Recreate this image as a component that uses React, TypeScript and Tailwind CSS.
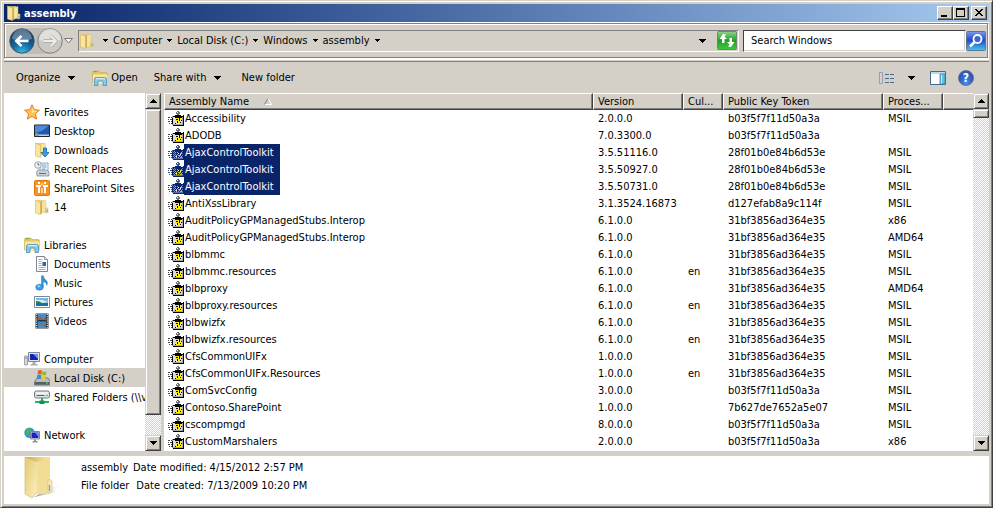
import type { ReactNode } from "react";

type IconProps = { className?: string };

const ASSEMBLIES = [
  { name: "Accessibility", version: "2.0.0.0", culture: "", token: "b03f5f7f11d50a3a", arch: "MSIL" },
  { name: "ADODB", version: "7.0.3300.0", culture: "", token: "b03f5f7f11d50a3a", arch: "" },
  { name: "AjaxControlToolkit", version: "3.5.51116.0", culture: "", token: "28f01b0e84b6d53e", arch: "MSIL", selected: true },
  { name: "AjaxControlToolkit", version: "3.5.50927.0", culture: "", token: "28f01b0e84b6d53e", arch: "MSIL", selected: true },
  { name: "AjaxControlToolkit", version: "3.5.50731.0", culture: "", token: "28f01b0e84b6d53e", arch: "MSIL", selected: true },
  { name: "AntiXssLibrary", version: "3.1.3524.16873", culture: "", token: "d127efab8a9c114f", arch: "MSIL" },
  { name: "AuditPolicyGPManagedStubs.Interop", version: "6.1.0.0", culture: "", token: "31bf3856ad364e35", arch: "x86" },
  { name: "AuditPolicyGPManagedStubs.Interop", version: "6.1.0.0", culture: "", token: "31bf3856ad364e35", arch: "AMD64" },
  { name: "blbmmc", version: "6.1.0.0", culture: "", token: "31bf3856ad364e35", arch: "MSIL" },
  { name: "blbmmc.resources", version: "6.1.0.0", culture: "en", token: "31bf3856ad364e35", arch: "MSIL" },
  { name: "blbproxy", version: "6.1.0.0", culture: "", token: "31bf3856ad364e35", arch: "AMD64" },
  { name: "blbproxy.resources", version: "6.1.0.0", culture: "en", token: "31bf3856ad364e35", arch: "MSIL" },
  { name: "blbwizfx", version: "6.1.0.0", culture: "", token: "31bf3856ad364e35", arch: "MSIL" },
  { name: "blbwizfx.resources", version: "6.1.0.0", culture: "en", token: "31bf3856ad364e35", arch: "MSIL" },
  { name: "CfsCommonUIFx", version: "1.0.0.0", culture: "", token: "31bf3856ad364e35", arch: "MSIL" },
  { name: "CfsCommonUIFx.Resources", version: "1.0.0.0", culture: "en", token: "31bf3856ad364e35", arch: "MSIL" },
  { name: "ComSvcConfig", version: "3.0.0.0", culture: "", token: "b03f5f7f11d50a3a", arch: "MSIL" },
  { name: "Contoso.SharePoint", version: "1.0.0.0", culture: "", token: "7b627de7652a5e07", arch: "MSIL" },
  { name: "cscompmgd", version: "8.0.0.0", culture: "", token: "b03f5f7f11d50a3a", arch: "MSIL" },
  { name: "CustomMarshalers", version: "2.0.0.0", culture: "", token: "b03f5f7f11d50a3a", arch: "x86" },
];

function Caret({ className = "" }: IconProps) {
  return (
    <svg viewBox="0 0 7 4" className={`h-[4px] w-[7px] ${className}`} shapeRendering="crispEdges" aria-hidden>
      <path d="M0 0h7v1H6v1H5v1H4v1H3V3H2V2H1V1H0z" fill="#000" />
    </svg>
  );
}

function SmallCaret() {
  return (
    <svg viewBox="0 0 5 3" className="h-[3px] w-[5px]" shapeRendering="crispEdges" aria-hidden>
      <path d="M0 0h5v1H4v1H3v1H2V2H1V1H0z" fill="#000" />
    </svg>
  );
}

function FolderIcon({ className = "size-4" }: IconProps) {
  return (
    <svg viewBox="0 0 16 16" className={className} aria-hidden>
      <path d="M2 1.200h8V13H2z" fill="#e2c566" />
      <path d="M7 2.500 12 1.500v11.500L7 14.500z" fill="#f5e3a0" stroke="#d9bf70" strokeWidth=".4" />
      <path d="M1.500 1 6.500 3.500v12L1.500 14z" fill="#f8e6a0" stroke="#d6b758" strokeWidth=".6" />
      <path d="M6.500 3.500 8 2.300V14l-1.500 1.500z" fill="#d0ad4d" />
      <path d="M11.500 9h2.500v4.500l-2.500.6z" fill="#f5e2a0" stroke="#cdb163" strokeWidth=".5" />
      <path d="M13 10.500v2.500" stroke="#3f9bdc" />
    </svg>
  );
}

function LargeFolderIcon({ className = "h-[43px] w-[40px]" }: IconProps) {
  return (
    <svg viewBox="0 0 40 43" className={className} aria-hidden>
      <defs>
        <linearGradient id="folderFront" x1="0" x2="1" y2="1">
          <stop offset="0" stopColor="#e2c873" />
          <stop offset="1" stopColor="#fcf0bd" />
        </linearGradient>
        <linearGradient id="folderBack" x1="0" x2="1">
          <stop offset="0" stopColor="#c9a548" />
          <stop offset=".55" stopColor="#e9cf7d" />
          <stop offset="1" stopColor="#f8e8ad" />
        </linearGradient>
        <linearGradient id="folderShade" x1="0" x2="1">
          <stop offset="0" stopColor="#8c8c8c" />
          <stop offset="1" stopColor="#fff" stopOpacity="0" />
        </linearGradient>
      </defs>
      <path d="M26 32 39 27 30 37 10 41z" fill="url(#folderShade)" />
      <path d="M1 1h25v36l-13 1z" fill="url(#folderBack)" />
      <path d="M13 6 26 1v36l-13 1z" fill="#f2dd94" />
      <path d="M24 24q4-1 4 1v11l-4 1z" fill="#f9ebb8" stroke="#d4b96e" strokeWidth=".6" />
      <path d="M1 1 13 6v30l-5 6-7-4z" fill="url(#folderFront)" stroke="#d9bd6b" strokeWidth=".7" />
      <path d="M13 6v30" stroke="#fdf4cc" strokeWidth=".8" />
      <path d="M25.500 29v6" stroke="#5ba6de" strokeWidth="1.300" />
    </svg>
  );
}

function LibraryIcon({ className = "size-4" }: IconProps) {
  return (
    <svg viewBox="0 0 16 16" className={className} aria-hidden>
      <path d="M.500 3q0-2 1.500-2H7l1 1.500h6q1.500 0 1.500 1.500v9H.5z" fill="#e6c763" stroke="#c8a94f" strokeWidth=".6" />
      <path d="M1.500 1.700H5" stroke="#55b043" />
      <path d="M1 4.500h14.500V14H1z" fill="#f8e7a4" />
      <path d="M2.500 15.500V9.500q0-2 2-2h8q2 0 2 2v6h-3.500V12q0-1-1-1H7q-1 0-1 1v3.500z" fill="#86cbed" stroke="#3584b8" strokeWidth=".7" />
      <path d="M4 8.700h9" stroke="#e2f5fd" />
    </svg>
  );
}

function StarIcon() {
  return (
    <svg viewBox="0 0 16 16" className="size-4" aria-hidden>
      <path d="m8 .8 2.200 4.900 5.200.5-3.900 3.600 1.100 5.300L8 12.400l-4.600 2.700 1.100-5.300L.6 6.200l5.200-.5z" fill="#ffc64a" stroke="#e8752a" strokeWidth="1" strokeLinejoin="round" />
      <path d="m8 3 1.300 3.500 3.700.5-5 2z" fill="#ffe69a" />
    </svg>
  );
}

function DesktopIcon() {
  return (
    <svg viewBox="0 0 16 16" className="size-4" aria-hidden>
      <path d="M.5 2h15v11.500H.5z" fill="#2457a8" stroke="#1c2733" />
      <path d="M1 2.500h14L8 8 1 10z" fill="#4b8add" />
      <path d="M1 11.500h14V13H1z" fill="#b9cde4" />
      <circle cx="3" cy="11.500" r="1.800" fill="#3ba0d8" />
      <path d="M2 11h1v1H2z" fill="#f0c430" />
    </svg>
  );
}

function DownloadsIcon() {
  return (
    <svg viewBox="0 0 16 16" className="size-4" aria-hidden>
      <path d="M2 1h9v12.500H2z" fill="#e5ca70" />
      <path d="M7 2.500 12 1v12l-5 1.500z" fill="#f5e3a0" />
      <path d="M1.500 1 6.500 3.500v12L1.500 14z" fill="#f8e6a0" stroke="#d6b758" strokeWidth=".6" />
      <path d="M9.500 6h3v4.500H15L11 15l-4-4.500h2.500z" fill="#3b9be4" stroke="#1866ad" strokeWidth=".8" />
    </svg>
  );
}

function RecentIcon() {
  return (
    <svg viewBox="0 0 16 16" className="size-4" aria-hidden>
      <path d="M6 2h8v9H6z" fill="#f4f7fa" stroke="#8a96a3" strokeWidth=".8" />
      <path d="M8 4h4.500M8 6h4.500M8 8h3" stroke="#5b9bd0" strokeWidth=".9" />
      <path d="M2.500 11 4 9h9l2 2v4h-12z" fill="#c8d0d8" stroke="#7e8995" strokeWidth=".7" />
      <path d="M5 12.500h7" stroke="#65717d" />
      <circle cx="4" cy="4" r="3.300" fill="#f1f3f5" stroke="#8f979f" strokeWidth=".9" />
      <path d="M4 2v2h1.500" fill="none" stroke="#444" strokeWidth=".8" />
    </svg>
  );
}

function SharePointIcon() {
  return (
    <svg viewBox="0 0 16 16" className="size-4" aria-hidden>
      <rect x=".5" y=".5" width="15" height="15" rx="1" fill="#f9931d" stroke="#e0760c" />
      <path d="M4 2h2v2H4zM10 2h2v2h-2z" fill="#fff" />
      <path d="M2 5h5v2H2zM9 5h5v2H9zM4 6h2v7H4zM10 6h2v7h-2z" fill="#fff" />
      <path d="M7 3h2v2H7zM7 8h2v5H7z" fill="#ffd08a" />
    </svg>
  );
}

function DocumentIcon() {
  return (
    <svg viewBox="0 0 16 16" className="size-4" aria-hidden>
      <path d="M2.500.5h8l3 3v12h-11z" fill="#fff" stroke="#7d8790" />
      <path d="M10.500.5v3h3" fill="#dfe5ea" stroke="#7d8790" strokeWidth=".8" />
      <path d="M4.500 3.500h4M4.500 5.500h3M4.500 7.500h3M4.500 9.500h3M4.500 11.500h7M4.500 13.500h7" stroke="#7c9dbb" strokeWidth=".8" />
      <path d="M8.500 6h3.500v4H8.500z" fill="#1d6cb5" />
    </svg>
  );
}

function MusicIcon() {
  return (
    <svg viewBox="0 0 16 16" className="size-4" aria-hidden>
      <path d="M7.500 12V.8h1.800Q9.600 4 12 5.200q2.500 2 .8 5.300.3-3-3.500-4V12z" fill="#2f92d8" stroke="#1b6bb0" strokeWidth=".4" />
      <ellipse cx="5.500" cy="12.200" rx="3.800" ry="3" fill="#3ba0e2" stroke="#1b6bb0" strokeWidth=".5" />
      <ellipse cx="4.800" cy="11.300" rx="1.600" ry="1" fill="#9bd5f7" />
    </svg>
  );
}

function PictureIcon() {
  return (
    <svg viewBox="0 0 16 16" className="size-4" aria-hidden>
      <path d="M.5 2.500h15v11H.5z" fill="#fff" stroke="#7d8790" />
      <path d="M2 4h12v8H2z" fill="#6fb9e8" />
      <path d="M2 6q5-1 12 2v2H2z" fill="#d7effa" />
      <path d="M2 7q4 0 6 2l6-.5V10H2z" fill="#2e7a4b" />
      <path d="M2 10h12v2H2z" fill="#1b6f9b" />
    </svg>
  );
}

function VideoIcon() {
  return (
    <svg viewBox="0 0 16 16" className="size-4" aria-hidden>
      <path d="M1.500.5h13v15h-13z" fill="#26323c" />
      <path d="M4 1h8v6H4zM4 8.500h8V15H4z" fill="#3c91d1" />
      <path d="M4 4q3-2 4 1t4-2v4H4zM5 11q2-2 3 0t4-1v4z" fill="#a55c3b" />
      <path d="M2.700 1v14M13.300 1v14" stroke="#fff" strokeWidth="1.200" strokeDasharray="1 1.200" />
    </svg>
  );
}

function ComputerIcon() {
  return (
    <svg viewBox="0 0 16 16" className="size-4" aria-hidden>
      <path d="M.5 5h3v9h-3z" fill="#d5d9dd" stroke="#858c94" strokeWidth=".7" />
      <path d="M1.500 7h1" stroke="#333" />
      <path d="M4.500 1.500h11v9h-11z" fill="#e3e5e8" stroke="#80868d" />
      <path d="M6 3h8v6H6z" fill="#1420b8" />
      <path d="M9 3h5v5z" fill="#6d8cf4" />
      <path d="M8.500 11h3v2h2v1.500h-7V13h2z" fill="#a8adb3" />
    </svg>
  );
}

function DiskIcon() {
  return (
    <svg viewBox="0 0 16 16" className="size-4" aria-hidden>
      <path d="M3 8h11l2 3v4H.500v-3z" fill="#b5bcc3" stroke="#626b73" strokeWidth=".8" />
      <path d="M1 12h14.500v2.700H1z" fill="#566069" />
      <path d="M12 13h2" stroke="#5be34c" strokeWidth="1.200" />
      <path d="M4 .8q2-1.500 4 0L7.500 4.500q-2-1.200-4 0z" fill="#ef5a28" />
      <path d="M8.500 1.200q2 1.200 4 0L12 4.800q-2 1-4 0z" fill="#82bf35" />
      <path d="M3.300 5.200q2-1.300 4 0L6.700 9q-2-1.200-4 0z" fill="#2e92d4" />
      <path d="M7.900 5.500q2 1.200 4 0L11.300 9q-2 1.200-4 0z" fill="#fcc52d" />
    </svg>
  );
}

function SharedIcon() {
  return (
    <svg viewBox="0 0 16 16" className="size-4" aria-hidden>
      <rect x=".5" y="2" width="15" height="7" rx="2" fill="#dfe2e5" stroke="#727a82" />
      <path d="M2 4h12" stroke="#fff" />
      <path d="M2.500 6.500h8" stroke="#59626a" />
      <path d="M12 6.500h2" stroke="#44c83c" />
      <path d="M7 9h2v3h6v2H1v-2h6z" fill="#27b268" />
      <path d="M5.500 11.500h5v3.500h-5z" fill="#159052" />
    </svg>
  );
}

function NetworkIcon() {
  return (
    <svg viewBox="0 0 16 16" className="size-4" aria-hidden>
      <circle cx="5.500" cy="5.800" r="5.200" fill="#2e96d8" />
      <path d="M2 3q2-2.500 4-2l1 2-2 2-1 3-2-1zM5 8l3-1v3l-2 1z" fill="#4cb648" />
      <path d="M6.500 4.500h9v7.500h-9z" fill="#dadde2" stroke="#80868d" />
      <path d="M7.500 5.500h7V11h-7z" fill="#1524bb" />
      <path d="M11 5.500h3.500V10z" fill="#7190f5" />
      <path d="M10 12.500h2V14h1.500v1.500h-5V14H10z" fill="#8e959c" />
    </svg>
  );
}

function AssemblyIcon({ selected }: { selected?: boolean }) {
  const ink = selected ? "#0a246a" : "#000";
  return (
    <svg viewBox="0 0 16 16" className="size-4 shrink-0" shapeRendering="crispEdges" aria-hidden>
      <path d="M9 0h2v1h1v2h-1v1H9V3H8V1h1z" fill={selected ? "#3d5696" : "#6e6e6e"} />
      <path d="M9 1h1v1H9z" fill="#fff" />
      <path d="M0 6h2v1H0zM3 6h1v1H3zM0 8h1v1H0zM2 8h2v1H2zM0 10h2v1H0zM3 10h1v1H3zM1 12h1v1H1zM3 12h1v1H3z" fill={selected ? "#33497f" : "#444"} />
      <path d="M4 5h11v9H4z" fill={selected ? "#5a70aa" : "#a8a8a8"} />
      <path d="M7 4h6v1H7zM5 5h10v1H5zM15 4h1v11h-1zM5 14h11v1H5zM4 7h1v6H4z" fill={ink} />
      <path d="M5 6h2v7H5z" fill={selected ? "#7f92c0" : "#dcdcdc"} />
      <path d="M7 6h1v1h6v6H7z" fill={selected ? "#b9c02c" : "#ffee00"} />
      <path d="M8 8h2v1H8zM11 7h1v3h-1zM9 10h1v2H9zM12 11h1v1h-1zM7 12h1v1H7zM7 6h7v1H7zM13 9h1v1h-1z" fill={ink} />
      <path d="M10 8h1v1h-1zM12 9h1v1h-1zM8 11h1v1H8z" fill="#fff" />
      {selected && (
        <path
          d="M5 6h1v1H5zM7 6h1v1H7zM6 7h1v1H6zM8 7h1v1H8zM10 7h1v1h-1zM12 7h1v1h-1zM5 8h1v1H5zM7 8h1v1H7zM6 9h1v1H6zM8 9h1v1H8zM10 9h1v1h-1zM5 10h1v1H5zM7 10h1v1H7zM13 10h1v1h-1zM6 11h1v1H6zM10 11h1v1h-1zM5 12h1v1H5zM9 12h1v1H9zM11 12h1v1h-1zM14 7h1v1h-1zM14 9h1v1h-1zM14 11h1v1h-1z"
          fill="#0a246a"
        />
      )}
    </svg>
  );
}

function BackForward() {
  return (
    <div className="flex items-center rounded-full bg-[#c0bdb6]">
      <button type="button" aria-label="Back" className="size-[26px]">
        <svg viewBox="0 0 26 26" className="size-[26px]" aria-hidden>
          <defs>
            <radialGradient id="backFill" cx=".5" cy="1" r=".9">
              <stop offset="0" stopColor="#35c3f0" />
              <stop offset=".5" stopColor="#12669c" />
              <stop offset="1" stopColor="#12365d" />
            </radialGradient>
          </defs>
          <circle cx="13" cy="13" r="12.200" fill="url(#backFill)" stroke="#46596b" />
          <path d="M3 11A10 10 0 0 1 23 11Q13 14 3 11z" fill="#fff" opacity=".32" />
          <path d="M19.500 13H8M12.500 7.800 7.300 13l5.200 5.200" fill="none" stroke="#fff" strokeWidth="2.600" />
        </svg>
      </button>
      <button type="button" aria-label="Forward" className="ml-[2px] size-[26px]">
        <svg viewBox="0 0 26 26" className="size-[26px]" aria-hidden>
          <circle cx="13" cy="13" r="12.200" fill="#cbc9c5" stroke="#85847f" />
          <path d="M2 12A11 11 0 0 1 24 12Q13 15 2 12z" fill="#e0dfdc" />
          <path d="M6.500 13H18M13.500 7.800l5.200 5.200-5.200 5.200" fill="none" stroke="#a9a7a3" strokeWidth="3.600" />
          <path d="M6.500 13H18M13.500 7.800l5.200 5.200-5.200 5.200" fill="none" stroke="#eeedeb" strokeWidth="2.200" />
        </svg>
      </button>
    </div>
  );
}

function WindowButton({ label, children }: { label: string; children: ReactNode }) {
  return (
    <button
      type="button"
      aria-label={label}
      className="h-[14px] w-4 border border-t-white border-r-[#404040] border-b-[#404040] border-l-white bg-[#d4d0c8] shadow-[inset_-1px_-1px_0_#808080]"
    >
      <svg viewBox="0 0 14 12" className="h-[12px] w-[14px]" shapeRendering="crispEdges" aria-hidden>
        {children}
      </svg>
    </button>
  );
}

function ScrollButton({ up }: { up?: boolean }) {
  return (
    <button
      type="button"
      aria-label={up ? "Scroll up" : "Scroll down"}
      className="flex h-4 w-4 shrink-0 items-center justify-center border border-t-[#d4d0c8] border-r-[#404040] border-b-[#404040] border-l-[#d4d0c8] bg-[#d4d0c8] shadow-[inset_1px_1px_0_#fff,inset_-1px_-1px_0_#808080]"
    >
      <Caret className={up ? "rotate-180" : ""} />
    </button>
  );
}

function ScrollBar({ thumb }: { thumb: string }) {
  return (
    <div className="flex w-4 shrink-0 flex-col bg-[repeating-conic-gradient(#d4d0c8_0_25%,#fff_0_50%)] bg-size-[2px_2px]">
      <ScrollButton up />
      <div className="min-h-0 flex-1">
        <div
          className="border border-t-[#d4d0c8] border-r-[#404040] border-b-[#404040] border-l-[#d4d0c8] bg-[#d4d0c8] shadow-[inset_1px_1px_0_#fff,inset_-1px_-1px_0_#808080]"
          style={{ height: thumb }}
        />
      </div>
      <ScrollButton />
    </div>
  );
}

type TreeItem = { label: string; icon: ReactNode; active?: boolean };

const TREE: { root: TreeItem; items: TreeItem[] }[] = [
  {
    root: { label: "Favorites", icon: <StarIcon /> },
    items: [
      { label: "Desktop", icon: <DesktopIcon /> },
      { label: "Downloads", icon: <DownloadsIcon /> },
      { label: "Recent Places", icon: <RecentIcon /> },
      { label: "SharePoint Sites", icon: <SharePointIcon /> },
      { label: "14", icon: <FolderIcon /> },
    ],
  },
  {
    root: { label: "Libraries", icon: <LibraryIcon /> },
    items: [
      { label: "Documents", icon: <DocumentIcon /> },
      { label: "Music", icon: <MusicIcon /> },
      { label: "Pictures", icon: <PictureIcon /> },
      { label: "Videos", icon: <VideoIcon /> },
    ],
  },
  {
    root: { label: "Computer", icon: <ComputerIcon /> },
    items: [
      { label: "Local Disk (C:)", icon: <DiskIcon />, active: true },
      { label: "Shared Folders (\\\\v", icon: <SharedIcon /> },
    ],
  },
  { root: { label: "Network", icon: <NetworkIcon /> }, items: [] },
];

function TreeRow({ item, nested }: { item: TreeItem; nested?: boolean }) {
  return (
    <a
      href="#"
      className={`flex h-[19px] items-center gap-1 whitespace-nowrap ${nested ? "pl-[30px]" : "pl-5"} ${item.active ? "bg-[#d4d0c8]" : ""}`}
    >
      <span className="shrink-0">{item.icon}</span>
      <span className="pt-[2px]">{item.label}</span>
    </a>
  );
}

function Sidebar() {
  return (
    <div className="flex w-[157px] shrink-0">
      <nav className="min-w-0 flex-1 space-y-[19px] overflow-hidden bg-white pt-[9px]">
        {TREE.map((group) => (
          <div key={group.root.label}>
            <TreeRow item={group.root} />
            {group.items.map((item) => (
              <TreeRow key={item.label} item={item} nested />
            ))}
          </div>
        ))}
      </nav>
      <ScrollBar thumb="94%" />
    </div>
  );
}

const HEAD_CELL =
  "h-[17px] truncate border border-t-white border-r-[#404040] border-b-[#404040] border-l-white bg-[#d4d0c8] px-1 py-0 text-left leading-[15px] font-normal shadow-[inset_-1px_-1px_0_#808080]";

function AssemblyTable() {
  return (
    <div className="flex min-w-0 flex-1 bg-white">
      <div className="min-w-0 flex-1 overflow-hidden">
        <table className="w-full table-fixed border-separate border-spacing-0">
          <colgroup>
            <col />
            <col className="w-[90px]" />
            <col className="w-[40px]" />
            <col className="w-[160px]" />
            <col className="w-[60px]" />
            <col className="w-[30px]" />
          </colgroup>
          <thead>
            <tr>
              <th className={HEAD_CELL}>
                Assembly Name
                <svg viewBox="0 0 8 7" className="ml-[15px] inline h-[7px] w-[8px] align-baseline" aria-hidden>
                  <path d="M4 .5l3.500 6H.5" fill="none" stroke="#fff" />
                  <path d="M.5 6.500 4 .5" stroke="#808080" />
                </svg>
              </th>
              <th className={HEAD_CELL}>Version</th>
              <th className={HEAD_CELL}>Cul...</th>
              <th className={HEAD_CELL}>Public Key Token</th>
              <th className={HEAD_CELL}>Proces...</th>
              <th className="border-t border-b border-l border-t-white border-b-[#404040] border-l-white bg-[#d4d0c8] p-0 shadow-[inset_0_-1px_0_#808080]" />
            </tr>
          </thead>
          <tbody className="leading-4">
            {ASSEMBLIES.map((row, i) => (
              <tr key={i} className="h-[17px]">
                <td className="p-0">
                  <div className="flex h-[17px] items-center pl-1">
                    <AssemblyIcon selected={row.selected} />
                    <span className={row.selected ? "h-[17px] bg-[#0a246a] pt-px pr-[6px] pl-px text-white" : "h-[17px] pt-px pl-px"}>
                      {row.name}
                    </span>
                  </div>
                </td>
                <td className="p-0 pt-px pl-[5px]">{row.version}</td>
                <td className="p-0 pt-px pl-[5px]">{row.culture}</td>
                <td className="p-0 pt-px pl-[5px]">{row.token}</td>
                <td className="p-0 pt-px pl-[5px]">{row.arch}</td>
                <td className="p-0" />
              </tr>
            ))}
          </tbody>
        </table>
      </div>
      <ScrollBar thumb="9px" />
    </div>
  );
}

function TitleBar() {
  return (
    <header className="flex h-[18px] items-center bg-linear-to-r from-[#0a246a] to-[#a6caf0] pr-[2px] pl-[2px]">
      <FolderIcon />
      <h1 className="ml-[2px] flex-1 font-bold text-white">assembly</h1>
      <WindowButton label="Minimize">
        <path d="M3 8h6v2H3z" />
      </WindowButton>
      <WindowButton label="Maximize">
        <path d="M2 1h9v9H2zM3 3v6h7V3z" fillRule="evenodd" />
      </WindowButton>
      <span className="w-[2px]" />
      <WindowButton label="Close">
        <path d="M3 2h2v1h1v1h2V3h1V2h2v1h-1v1H9v1H8v1h1v1h1v1h1v1H9V8H8V7H6v1H5v1H3V8h1V7h1V6h1V5H5V4H4V3H3z" />
      </WindowButton>
    </header>
  );
}

function AddressBar() {
  return (
    <div className="mr-px flex h-[35px] shrink-0 items-center border border-[#808080] pr-px pl-1 shadow-[inset_1px_1px_0_#fff,1px_1px_0_#fff]">
      <BackForward />
      <button type="button" aria-label="Recent pages" className="ml-px">
        <svg viewBox="0 0 9 6" className="h-[6px] w-[9px]" aria-hidden>
          <path d="M.5.500h8L4.500 5z" fill="#f4f4f4" stroke="#77767a" />
        </svg>
      </button>
      <div className="ml-[5px] flex h-[22px] min-w-0 flex-1 items-center border border-t-[#808080] border-r-white border-b-white border-l-[#808080] pr-px">
        <FolderIcon />
        <ol className="ml-2 flex flex-1 items-center">
          <li>
            <SmallCaret />
          </li>
          {["Computer", "Local Disk (C:)", "Windows", "assembly"].map((crumb) => (
            <li key={crumb} className="flex items-center">
              <a href="#" className="mr-[5px] ml-[5px]">
                {crumb}
              </a>
              <SmallCaret />
            </li>
          ))}
        </ol>
        <button type="button" aria-label="Previous locations" className="mr-[11px]">
          <Caret />
        </button>
        <button type="button" aria-label="Refresh">
          <svg viewBox="0 0 20 19" className="h-[19px] w-5" aria-hidden>
            <defs>
              <linearGradient id="refreshFill" x2="0" y2="1">
                <stop offset="0" stopColor="#8fd48c" />
                <stop offset=".5" stopColor="#22a02a" />
                <stop offset="1" stopColor="#3cc93c" />
              </linearGradient>
            </defs>
            <rect x=".5" y=".5" width="19" height="18" rx="1" fill="url(#refreshFill)" stroke="#6f8570" />
            <path d="M6 3 2.500 8H5v4h2.500V8H10L7.500 5.500 9 3.500z" fill="#fff" />
            <path d="M14 16l3.500-5H15V7h-2.500v4H10l2.500 2.500L11 15.500z" fill="#fff" />
          </svg>
        </button>
      </div>
      <input
        type="text"
        aria-label="Search Windows"
        placeholder="Search Windows"
        className="ml-[4px] h-[22px] w-[223px] border border-t-[#404040] border-r-white border-b-white border-l-[#404040] bg-white pl-[7px] shadow-[inset_-1px_-1px_0_#d4d0c8] placeholder:text-black"
      />
      <button type="button" aria-label="Search">
        <svg viewBox="0 0 20 20" className="size-5" aria-hidden>
          <defs>
            <linearGradient id="searchFill" x2="0" y2="1">
              <stop offset="0" stopColor="#7f9bea" />
              <stop offset=".45" stopColor="#2148cc" />
              <stop offset="1" stopColor="#40c8f4" />
            </linearGradient>
          </defs>
          <rect x=".5" y=".5" width="19" height="19" rx="1" fill="url(#searchFill)" stroke="#607390" />
          <circle cx="11.500" cy="8" r="4" fill="#3c66d4" stroke="#fff" strokeWidth="1.800" />
          <path d="m8.500 11-4.500 4.500" stroke="#fff" strokeWidth="2.600" />
        </svg>
      </button>
    </div>
  );
}

function Toolbar() {
  return (
    <div className="flex h-[31px] shrink-0 items-center pr-[15px] pl-3">
      <button type="button" className="flex items-center gap-2">
        Organize
        <Caret />
      </button>
      <button type="button" className="ml-[17px] flex items-center gap-[3px]">
        <LibraryIcon />
        Open
      </button>
      <button type="button" className="ml-4 flex items-center gap-2">
        Share with
        <Caret />
      </button>
      <button type="button" className="ml-5">
        New folder
      </button>
      <div className="ml-auto flex items-center">
        <button type="button" aria-label="Change your view" className="mr-[14px]">
          <svg viewBox="0 0 15 12" className="h-[12px] w-[15px]" aria-hidden>
            <path d="M.5.500h3v11h-3zM.5 4h3M.5 8h3" fill="#fff" stroke="#7f8ea6" strokeWidth=".8" />
            <path d="M1.500 1.500h1v1h-1zM1.500 9.500h1v1h-1z" fill="#2857a8" />
            <path d="M1.500 5.500h1v1h-1z" fill="#d02020" />
            <path d="M6 2.500h4M11 2.500h4M6 6.500h4M11 6.500h4M6 10.500h4M11 10.500h4" stroke="#4a6a85" />
          </svg>
        </button>
        <button type="button" aria-label="More view options" className="mr-[15px]">
          <Caret />
        </button>
        <button type="button" aria-label="Show the preview pane" className="mr-3">
          <svg viewBox="0 0 16 14" className="h-[14px] w-4" aria-hidden>
            <path d="M.5.500h15v13H.5z" fill="#fff" stroke="#3f6a91" />
            <path d="M1 1h14v2H1z" fill="#c4d6e6" />
            <path d="M10 3h5v10h-5z" fill="#62c1dd" stroke="#3f7fa2" strokeWidth=".8" />
            <path d="M11.500 3.500v9" stroke="#bdeaf5" />
          </svg>
        </button>
        <button type="button" aria-label="Get help" className="flex size-4 items-center justify-center rounded-full border border-[#69708a] bg-radial-[at_50%_90%] from-[#4b8ff0] to-[#1c3fa5] text-[12px] leading-[14px] font-bold text-white">
          ?
        </button>
      </div>
    </div>
  );
}

function DetailsPane() {
  return (
    <footer className="mt-[5px] flex h-12 shrink-0 items-start bg-white pl-5">
      <LargeFolderIcon />
      <dl className="ml-[17px] pt-[3px] text-[11px] leading-[18px] whitespace-nowrap">
        <div className="flex">
          <dt className="mr-[5px]">assembly</dt>
          <dd>Date modified: 4/15/2012 2:57 PM</dd>
        </div>
        <div className="flex">
          <dt className="mr-[7px]">File folder</dt>
          <dd>Date created: 7/13/2009 10:20 PM</dd>
        </div>
      </dl>
    </footer>
  );
}

export default function App() {
  return (
    <div className="flex h-screen flex-col border-t border-r border-b border-l border-t-[#d4d0c8] border-r-[#404040] border-b-[#404040] border-l-[#d4d0c8] bg-[#d4d0c8] p-[3px] font-['DejaVu_Sans_Condensed','DejaVu_Sans',sans-serif] text-[11px] leading-[17px] text-black shadow-[inset_1px_1px_0_#fff,inset_-1px_-1px_0_#808080]">
      <TitleBar />
      <div className="h-px shrink-0 bg-white" />
      <AddressBar />
      <div className="mt-px h-[3px] shrink-0 border-t border-b border-t-white border-b-[#808080]" />
      <Toolbar />
      <main className="flex min-h-0 flex-1 gap-[3px]">
        <Sidebar />
        <AssemblyTable />
      </main>
      <DetailsPane />
    </div>
  );
}
